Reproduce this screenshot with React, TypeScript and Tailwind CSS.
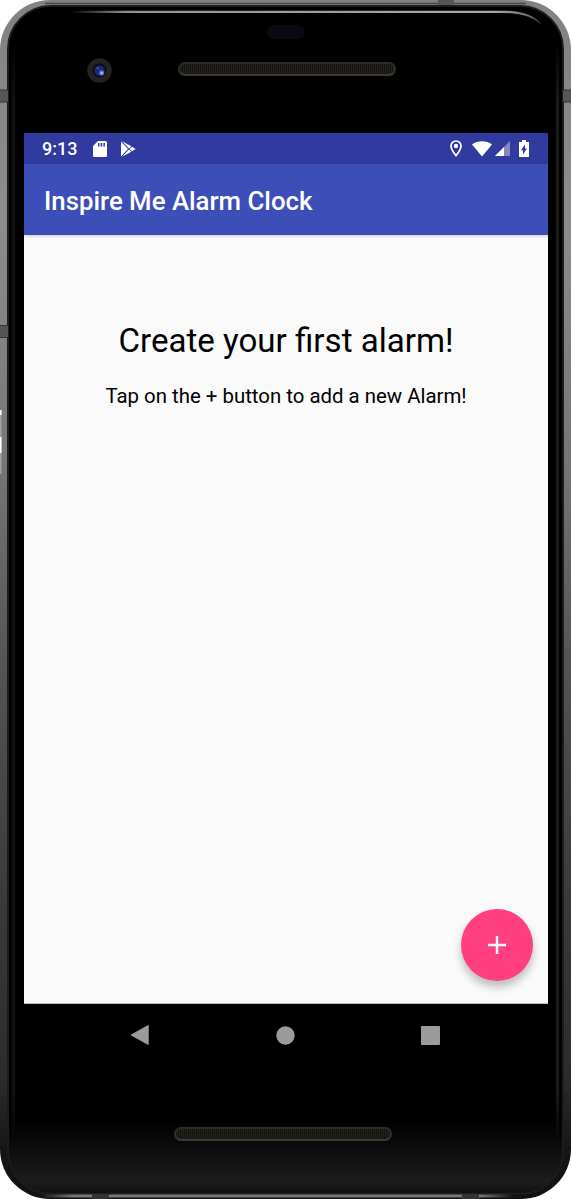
import React from "react";

function Speaker({ className }: { className: string }) {
  return (
    <div
      className={`rounded-full border-2 border-t-[#2b2b2b] border-x-[#302f2d] border-b-[#3d3a35] bg-[repeating-linear-gradient(90deg,#15130f_0px,#15130f_1px,#25221d_1px,#25221d_2px)] ${className}`}
    />
  );
}

function StatusBar() {
  return (
    <div className="flex h-[31px] shrink-0 items-center bg-[#303a9f] pl-[18px] text-white">
      <span className="w-[51px] text-[18px] leading-[31px] font-medium">9:13</span>
      <svg width="14" height="16" viewBox="0 0 14 16" fill="currentColor">
        <path
          fillRule="evenodd"
          d="M5 0h7.5Q14 0 14 1.5v13q0 1.5-1.5 1.5h-11Q0 16 0 14.500V5zM5 2v3.500h1.500V2zm2.700 0v3.500h1.500V2zm2.700 0v3.500h1.500V2z"
        />
      </svg>
      <svg className="ml-[14px]" width="15" height="16" viewBox="0 0 15 16" fill="currentColor">
        <path d="M0 .5 7 8 0 15.500z" />
        <path d="M1 .2 10.300 5.200 8 7.500zM1 15.800 10.300 10.800 8 8.500z" />
        <path d="M11 5.700 14.600 8 11 10.300 8.700 8z" />
      </svg>
      <svg className="ml-auto" width="12" height="17" viewBox="0 0 12 17">
        <path
          d="M6 1C3.200 1 1 3.200 1 6c0 3.600 5 9.600 5 9.600S11 9.600 11 6c0-2.800-2.200-5-5-5z"
          fill="none"
          stroke="currentColor"
          strokeWidth="1.700"
        />
        <circle cx="6" cy="6" r="2.200" fill="currentColor" />
      </svg>
      <svg className="ml-[10px]" width="20" height="16" viewBox="0 0 20 16" fill="currentColor">
        <path d="M0 3.500C5.500-.8 14.500-.8 20 3.500L10 15.500z" />
      </svg>
      <svg className="ml-[3px]" width="15" height="15" viewBox="0 0 15 15" fill="currentColor">
        <path d="M15 0v15H0z" opacity=".4" />
        <path d="M9 6v9H0z" />
      </svg>
      <svg className="mr-[19px] ml-[9px]" width="10" height="17" viewBox="0 0 10 17">
        <path d="M3 0h4v2h3v15H0V2h3z" fill="currentColor" />
        <path d="M6 4.500v4h2L4 14.500v-4.300H2z" fill="#303a9f" />
      </svg>
    </div>
  );
}

function NavigationBar() {
  return (
    <div className="flex h-[62px] items-center justify-between pr-[108px] pl-[106px]">
      <svg width="20" height="22" viewBox="0 0 20 22" fill="#9b9b9b" stroke="#9b9b9b" strokeLinejoin="round">
        <path d="M18.200 1.500v19L1.200 11z" />
      </svg>
      <svg width="19" height="19" viewBox="0 0 19 19">
        <circle cx="9.500" cy="9.500" r="9.200" fill="#9b9b9b" />
      </svg>
      <div className="size-[19px] rounded-[1px] bg-[#9b9b9b]" />
    </div>
  );
}

function Hardware() {
  return (
    <>
      <div className="absolute inset-x-[7px] top-[5px] bottom-[4px] rounded-[44px] border-2 border-[#1c1c1c] bg-[linear-gradient(180deg,#000_0%,#000_94%,#1c1c1c_99%,#111_100%)]" />
      <div className="absolute top-[40px] bottom-[50px] left-[11px] w-[5px] bg-[linear-gradient(90deg,#000,#171717,#000)] [mask-image:linear-gradient(transparent,#000_60px,#000_1050px,transparent)]" />
      <div className="absolute top-[40px] right-[11px] bottom-[50px] w-[5px] bg-[linear-gradient(90deg,#000,#202020,#000)] [mask-image:linear-gradient(transparent,#000_60px,#000_1050px,transparent)]" />
      <svg className="absolute inset-0" width="571" height="1199" viewBox="0 0 571 1199" fill="none">
        <defs>
          <linearGradient id="glint" x1="70" x2="543" y1="0" y2="0" gradientUnits="userSpaceOnUse">
            <stop stopColor="#93999c" stopOpacity="0" />
            <stop offset=".12" stopColor="#8d9497" />
            <stop offset=".9" stopColor="#a2a9ab" />
            <stop offset="1" stopColor="#a2a9ab" stopOpacity=".5" />
          </linearGradient>
          <linearGradient id="base" x1="0" x2="571" y1="0" y2="0" gradientUnits="userSpaceOnUse">
            <stop offset=".07" stopColor="#777" stopOpacity="0" />
            <stop offset=".13" stopColor="#777" />
            <stop offset=".84" stopColor="#777" />
            <stop offset=".9" stopColor="#777" stopOpacity="0" />
          </linearGradient>
        </defs>
        <path d="M70 10.800H505Q532 11 541.500 25Q530 13.500 505 13H70z" fill="url(#glint)" />
        <path d="M45 3.500H526" stroke="#444" strokeWidth="1.500" />
        <path d="M20 1196H551" stroke="url(#base)" strokeWidth="3" />
        <path d="M0 90h8v12H0zM563 90h8v12h-8zM0 326h8v11H0zM438 0h16v5h-16z" fill="#555" />
        <path d="M0 90h8M0 102h8M563 90h8M563 102h8M0 325.500h8M0 337.500h8" stroke="#333" />
        <path d="M563 1095h8M563 1108h8" stroke="#222" />
        <path d="M92 1194h17v5H92zM462 1194h17v5h-17z" fill="#333" />
        <path d="M0 410h1.500v64H0z" fill="#9ba5a8" />
        <path d="M0 410h1.500v5H0zM0 437h1.500v16H0z" fill="#fff" />
      </svg>
    </>
  );
}

export default function App() {
  return (
    <div className="h-[1199px] w-[571px] overflow-hidden bg-white font-[Roboto,sans-serif]">
      <div className="relative h-full overflow-hidden rounded-[50px] bg-[linear-gradient(180deg,#828282_0%,#8d8d8d_18%,#777_38%,#555_55%,#3a3a3a_75%,#2c2c2c_90%,#151515_96%,#111_100%)]">
        <Hardware />
        <div className="relative flex h-full flex-col pr-[23px] pl-[24px]">
          <div className="flex h-[133px] shrink-0 flex-col">
            <div className="mt-[25px] ml-[243px] h-[14px] w-[38px] rounded-full bg-[#090a10]" />
            <div className="mt-[19px] flex items-start">
              <svg className="ml-[63px]" width="25" height="25" viewBox="0 0 25 25">
                <circle cx="12.500" cy="12.500" r="12.200" fill="#252322" />
                <circle cx="12.500" cy="12.500" r="7" fill="#0b0c17" />
                <circle cx="12.500" cy="12.500" r="5.200" fill="#1b2768" />
                <circle cx="14.500" cy="14.800" r="2.800" fill="#4a5dc2" />
                <circle cx="14.800" cy="15" r="1.500" fill="#a4aff5" />
                <circle cx="10.700" cy="10.200" r="1" fill="#5266b4" />
              </svg>
              <Speaker className="mt-[4px] ml-[66px] h-[14px] w-[218px]" />
            </div>
          </div>

          <div className="flex h-[871px] shrink-0 flex-col border-b border-[#bbb] bg-[#fafafa]">
            <StatusBar />
            <header className="z-10 flex h-[71px] shrink-0 items-center bg-[#3e4eb8] px-5 pt-[3px] shadow-[0_1px_3px_rgba(0,0,0,0.2)]">
              <h1 className="text-[25.800px] font-medium whitespace-nowrap text-white">Inspire Me Alarm Clock</h1>
            </header>
            <main className="flex flex-1 flex-col items-center pt-[86px] text-black">
              <h2 className="text-[33.100px] leading-[40px] whitespace-nowrap">Create your first alarm!</h2>
              <p className="mt-[22px] text-[20.400px] leading-[26px] whitespace-nowrap">
                Tap on the + button to add a new Alarm!
              </p>
              <button
                aria-label="Add alarm"
                className="mt-auto mr-[15px] mb-[22px] flex size-[72px] items-center justify-center self-end rounded-full bg-[#ff3f80] shadow-[0_6px_9px_rgba(0,0,0,0.25)]"
              >
                <svg width="18" height="18" viewBox="0 0 18 18" stroke="#fff" strokeWidth="2.400">
                  <path d="M9 0v18M0 9h18" />
                </svg>
              </button>
            </main>
          </div>

          <NavigationBar />
          <Speaker className="mt-[61px] ml-[150px] h-[14px] w-[218px]" />
        </div>
      </div>
    </div>
  );
}
